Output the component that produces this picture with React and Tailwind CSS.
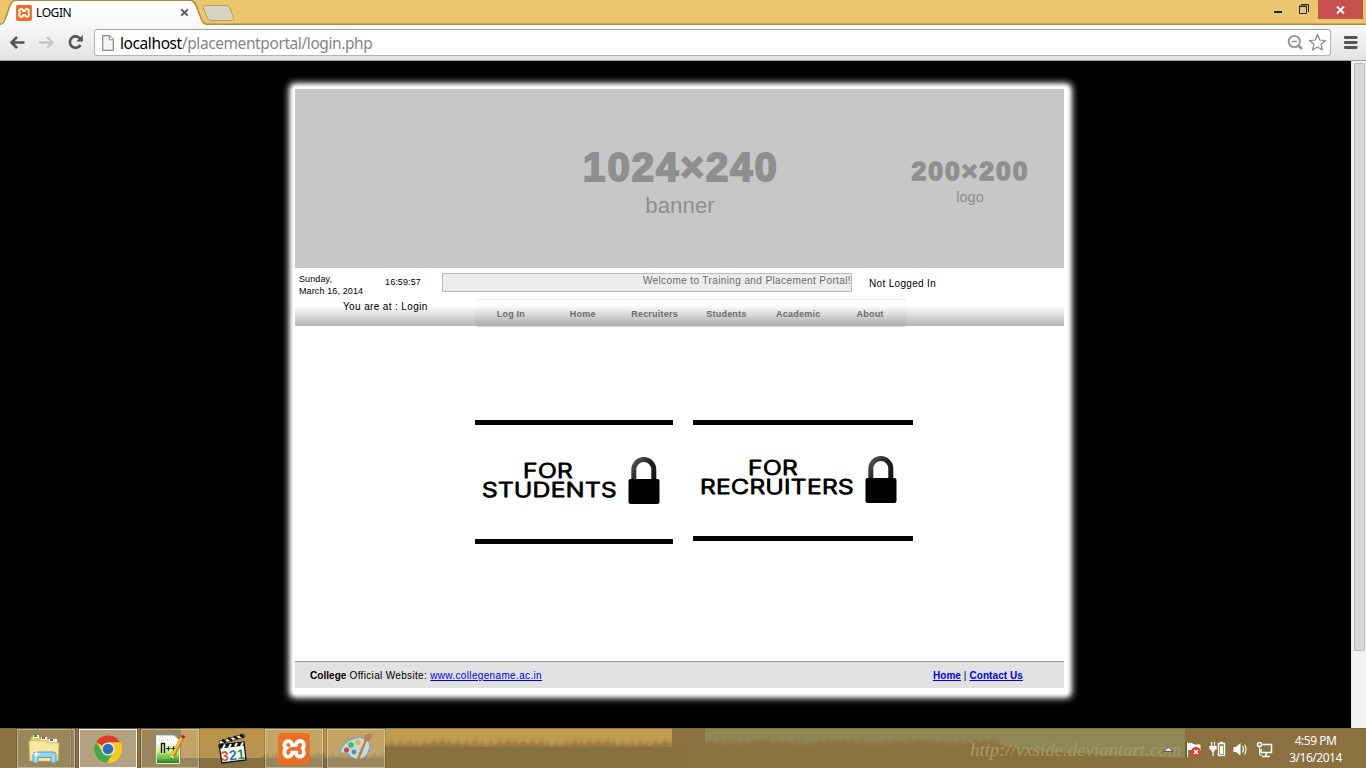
import React from "react";
import { SiXampp } from "react-icons/si";

const grass = (x0, x1, base, amp) => {
  let d = `M${x0} 40V${base}`;
  let i = 0;
  for (let x = x0; x < x1; x += 3) {
    const h = ((i * 37) % 11) / 11;
    d += `L${x + 1} ${base - h * amp}L${Math.min(x + 3, x1)} ${base + 2 * Math.sin(i / 4)}`;
    i += 1;
  }
  return `${d}L${x1} 40Z`;
};

function XamppIcon({ size }) {
  return (
    <span className="relative flex shrink-0 rounded-[4px] bg-linear-to-b from-white to-white bg-clip-content p-[2px]" style={{ width: size, height: size }}>
      <SiXampp className="-m-[2px] shrink-0 text-[#ee6f22]" size={size} />
    </span>
  );
}

function TabStrip() {
  return (
    <div className="relative flex h-[25px] bg-[#ebc66d]">
      <svg className="absolute inset-0" width="1366" height="25">
        <defs>
          <linearGradient id="tab" x1="0" y1="0" x2="0" y2="1">
            <stop offset="0" stopColor="#fff" />
            <stop offset="1" stopColor="#f8f8f8" />
          </linearGradient>
        </defs>
        <path d="M0 23.5H1366" stroke="#dbb55d" />
        <path d="M0 24.5C4 24 4.500 21 6 17L10 5Q12 .5 15 .5H190Q194 .5 196 5L201 18Q203 24.500 208 24.500H1366" fill="none" stroke="#a98a48" strokeWidth="1.300" />
        <path d="M0 25C4 25 5 21 7 17L11 6Q13 1 16 1H189Q193 1 195 6L200 18Q202 25 206 25Z" fill="url(#tab)" />
        <path d="M205 5.500H226Q229 5.500 230 8L233.500 18Q234.500 20.500 231 20.500H211Q208.500 20.500 207.500 18L203.500 8Q202.500 5.500 205 5.500Z" fill="#d7d3c2" stroke="#b99c5e" />
      </svg>
      <div className="relative flex w-[206px] items-center pl-4">
        <XamppIcon size={16} />
        <span className="ml-1 font-['Noto_Sans',sans-serif] text-[12px] leading-4 tracking-[-0.4px] text-black">LOGIN</span>
        <svg className="ml-auto mr-[17px]" width="9" height="9" viewBox="0 0 9 9"><path d="M1.300 1.300L7.700 7.700M7.700 1.300L1.300 7.700" stroke="#555" strokeWidth="1.900" /></svg>
      </div>
      <div className="relative ml-auto mr-[3px] flex h-[19px]">
        <svg width="45" height="19"><path d="M1 12H9" stroke="#222" strokeWidth="2" /><path d="M26.500 6.500H33.500V13.500H26.500ZM28 4.500H35.500V12" fill="none" stroke="#222" /><path d="M26 6H34" stroke="#222" strokeWidth="1" /></svg>
        <div className="flex w-[45px] items-center justify-center bg-[#c75050]">
          <svg width="9" height="8" viewBox="0 0 9 8"><path d="M1 .5L8 7.500M8 .5L1 7.500" stroke="#fff" strokeWidth="1.900" /></svg>
        </div>
      </div>
    </div>
  );
}

function Toolbar() {
  return (
    <div className="flex h-9 border-b border-[#a0a0a0] bg-linear-to-b from-[#f8f8f8] to-[#e3e3e3] pt-1">
      <svg width="94" height="28">
        <path d="M24.500 13.500H12M17 8L11.500 13.500L17 19" fill="none" stroke="#555" strokeWidth="2.600" />
        <path d="M39 13.500H52M47 8L52.500 13.500L47 19" fill="none" stroke="#c6c6c6" strokeWidth="2.400" />
        <path d="M80 9.500A5.700 5.700 0 1 0 80.500 16" fill="none" stroke="#555" strokeWidth="2.600" />
        <path d="M82.800 6V12.500H76.300Z" fill="#555" />
      </svg>
      <div className="flex h-[27px] w-[1237px] items-center rounded-[3px] border border-[#b2b2b2] border-t-[#a0a0a0] bg-white">
        <svg className="ml-[7px]" width="12" height="16" viewBox="0 0 12 16"><path d="M.7 .7H7.500L11.300 4.500V15.300H.7Z" fill="#f5f5f5" stroke="#8b8b8b" strokeWidth="1.200" /><path d="M7.300 .7V4.800H11.300" fill="#fff" stroke="#8b8b8b" /></svg>
        <span className="ml-[6px] font-['Noto_Sans',sans-serif] text-[15.500px] leading-6 tracking-[-0.41px] text-[#858585]"><span className="text-black">localhost</span>/placementportal/login.php</span>
        <svg className="ml-auto mr-[3px]" width="40" height="20">
          <circle cx="7.300" cy="8.500" r="5.600" fill="none" stroke="#999" strokeWidth="2" /><path d="M4.500 8.500H10" stroke="#888" strokeWidth="1.400" /><path d="M11 12L15 16" stroke="#999" strokeWidth="2.800" />
          <path d="M30.500 1.500L32.700 7L38.500 7.500L34.100 11.300L35.400 17L30.500 14L25.600 17L26.900 11.300L22.500 7.500L28.300 7Z" fill="#fff" stroke="#888" strokeWidth="1.200" strokeLinejoin="round" />
        </svg>
      </div>
      <svg className="ml-[13px]" width="14" height="28"><path d="M1.200 8.500H12.200M1.200 13.500H12.200M1.200 18.500H12.200" stroke="#555" strokeWidth="2.800" strokeLinecap="round" /></svg>
    </div>
  );
}

function Padlock() {
  return (
    <svg width="32" height="49" viewBox="0 0 32 49">
      <defs><linearGradient id="shackle" x1="0" y1="0" x2="1" y2="1"><stop offset="0" stopColor="#555" /><stop offset=".5" stopColor="#222" /><stop offset="1" stopColor="#111" /></linearGradient></defs>
      <path d="M5.800 27V13.500A10 10 0 0 1 25.800 13.500V27" fill="none" stroke="url(#shackle)" strokeWidth="5" />
      <rect x=".5" y="23" width="31" height="25" rx="2" fill="#000" />
    </svg>
  );
}

function LoginCard({ word, wordWidth, className, forX, lineGap }) {
  return (
    <div className={`flex flex-col justify-between border-y-[5px] border-black ${className}`}>
      <div className="flex">
        <svg width={wordWidth + 8} height="50" fill="#000" stroke="#000" strokeWidth="1.100" strokeLinejoin="round" fontFamily="Inter, sans-serif" fontWeight="300">
          <text x={forX} y={lineGap} fontSize="20" textLength="50" lengthAdjust="spacingAndGlyphs">FOR</text>
          <text x="0" y={lineGap + 19} fontSize="20" textLength={wordWidth} lengthAdjust="spacingAndGlyphs">{word}</text>
        </svg>
        <div className="ml-[3px]"><Padlock /></div>
      </div>
    </div>
  );
}

const navItems = ["Log In", "Home", "Recruiters", "Students", "Academic", "About"];

function Portal() {
  return (
    <div className="mt-[26px] h-[607px] w-[775px] rounded-[2px] bg-white pl-[2px] pr-[4px] pt-[2px] font-['Liberation_Sans',Arial,sans-serif] text-[10px] leading-3 tracking-[0.33px] text-black shadow-[0_0_7px_4px_#fff,0_0_4px_1px_#fff]">
      <div className="flex h-[604px] w-[769px] flex-col">
        <div className="flex h-[179px] shrink-0 bg-[#c7c7c7] text-[#8f8f8f]">
          <div className="ml-[261px] w-[250px] pt-[55px] text-center tracking-normal">
            <div className="text-[40px] leading-[46px] font-bold tracking-[2.100px] [-webkit-text-stroke:2px_#8f8f8f]">1024×240</div>
            <div className="mt-[3px] -ml-[2px] text-[22.300px] leading-[26px]">banner</div>
          </div>
          <div className="ml-[89px] w-[150px] pt-[66px] text-center tracking-normal">
            <div className="ml-px text-[26.500px] leading-8 font-bold tracking-[2px] [-webkit-text-stroke:1.500px_#8f8f8f]">200×200</div>
            <div className="mt-px text-[14.500px] leading-[18px]">logo</div>
          </div>
        </div>
        <div className="flex h-[58px] shrink-0 bg-linear-to-b from-white from-65% to-[#b5b5b5]">
          <div className="w-[147px]">
            <div className="flex pt-[5px] pl-1 text-[9px] tracking-[0.12px]">
              <div className="w-[86px]">Sunday,<br />March 16, 2014</div>
              <div className="pt-[3px]">16:59:57</div>
            </div>
            <div className="mt-1 pl-12 tracking-[0.37px]">You are at : Login</div>
          </div>
          <div className="w-[465px]">
            <div className="mt-[5px] h-[19px] w-[410px] border border-[#bcbcbc] bg-[#ededed] pt-px text-right tracking-[0.39px] text-[#6b6b6b]">Welcome to Training and Placement Portal!</div>
            <div className="mt-[7px] ml-[33px] flex h-[28px] w-[432px] rounded-[3px] border-y border-t-[#ececec] border-b-[#dedede] bg-linear-to-b from-white from-20% to-[#b0b0b0] to-95% pl-px text-center text-[9px] leading-[28px] font-bold text-[#6b6b6b]">
              {navItems.map((item) => <a key={item} className="-ml-px mr-px w-[71.900px] tracking-[0.22px]">{item}</a>)}
            </div>
          </div>
          <div className="mt-[10px] -ml-[38px]">Not Logged In</div>
        </div>
        <div className="flex grow pt-[94px] pl-[180px]">
          <LoginCard word="STUDENTS" wordWidth={135} forX={41} lineGap={22} className="h-[124px] w-[198px] pt-[31px] pl-[7px]" />
          <LoginCard word="RECRUITERS" wordWidth={154} forX={48} lineGap={20} className="ml-5 h-[121px] w-[220px] pt-[30px] pl-[7px]" />
        </div>
        <div className="mb-[5px] flex h-[27px] items-center justify-between border-t border-[#9c9c9c] bg-[#e1e1e1] pt-[2px] pr-[41px] pl-[15px]">
          <div><b className="tracking-[0.050px]">College</b> Official Website: <a className="tracking-[0.35px] text-[#0000ee] underline">www.collegename.ac.in</a></div>
          <div className="tracking-[0.080px]"><a className="font-bold text-[#0000ee] underline">Home</a> | <a className="font-bold text-[#0000ee] underline">Contact Us</a></div>
        </div>
      </div>
    </div>
  );
}

function ExplorerIcon() {
  return (
    <svg className="shrink-0" width="34" height="32" viewBox="0 0 34 32">
      <path d="M4 4H12L14 6H30V26H3Z" fill="#e7cb65" stroke="#c4a847" />
      <path d="M6 2H12V5H6Z" fill="#fff" /><path d="M7 2H10V4H7Z" fill="#1ca52c" /><path d="M14 4H20V7H14Z" fill="#fff" /><path d="M15 4H18V6H15Z" fill="#c44325" /><path d="M22 6H30V9H22Z" fill="#fff" /><path d="M23 6H26V8H23Z" fill="#2b78c8" />
      <path d="M2 8H18L20 10H32L31 28H3Z" fill="#f8e99f" stroke="#d7bd65" strokeWidth=".7" />
      <path d="M6 30V21Q6 19 9 19H26Q29 19 29 21V30H24V24.500H11V30Z" fill="#9bd3ec" stroke="#539dbe" />
      <path d="M9 16L9.800 20.200L14 21L9.800 21.800L9 26L8.200 21.800L4 21L8.200 20.200Z" fill="#fff" />
    </svg>
  );
}

function ChromeIcon() {
  return (
    <svg width="30" height="30" viewBox="0 0 30 30">
      <circle cx="15" cy="15" r="14" fill="#f8cb22" />
      <path d="M15 15L3 8A14 14 0 0 1 27.300 8.500L15 8.500Z" fill="#da3b32" />
      <path d="M2.900 8A14 14 0 0 0 14 29L20.800 18.500L15 15L9.500 18Z" fill="#43a84b" />
      <path d="M15 8.500H27.300A14 14 0 0 1 14 29L20.500 18Z" fill="#f8cb22" />
      <circle cx="15" cy="15" r="6.600" fill="#eee" /><circle cx="15" cy="15" r="5.300" fill="#2d70b8" />
    </svg>
  );
}

function NotepadIcon() {
  return (
    <svg width="32" height="32" viewBox="0 0 32 32">
      <defs><linearGradient id="page" x1="0" y1="0" x2="0" y2="1"><stop offset=".25" stopColor="#fff" /><stop offset=".6" stopColor="#c0e96e" /><stop offset="1" stopColor="#148018" /></linearGradient></defs>
      <path d="M2.500 2.500H20L25.500 8V30.500H2.500Z" fill="url(#page)" stroke="#e7ecdf" />
      <path d="M4 1.500H23" stroke="#8897a2" strokeDasharray="1.500 1" strokeWidth="2" /><path d="M5 7H20M5 25H21" stroke="#b4cba2" strokeDasharray="1 1" />
      <path d="M7.500 20V10.500H10.500V20" fill="none" stroke="#111" strokeWidth="1.400" /><path d="M12 15.500H16.500M14.300 13.200V17.800M17.500 15.500H22M19.700 13.200V17.800" stroke="#111" />
      <path d="M29 3L19 23" stroke="#cf801b" strokeWidth="4" /><path d="M28 4L18.500 22" stroke="#f9c849" strokeWidth="1.800" /><path d="M27.500 3L30.500 4.500" stroke="#aa2634" strokeWidth="3" /><path d="M17.300 22L16.800 26L20 24Z" fill="#eee" /><path d="M16.800 26L18 25" stroke="#111" />
    </svg>
  );
}

function ClapperIcon() {
  return (
    <svg width="32" height="34" viewBox="0 0 32 34">
      <path d="M2 9L27 2L28 5L3 12Z" fill="#fff" stroke="#111" strokeWidth=".7" />
      <path d="M5 8L9 10M11 6L15 8.500M17 4.500L21 7M23 3L27 5" stroke="#111" strokeWidth="2.600" />
      <path d="M2 13L27 10L29 28L5 31Z" fill="#fff" stroke="#111" strokeWidth="1.300" /><path d="M2.500 13L27 10L27.500 13.500L3 16.500Z" fill="#111" />
      <path d="M8 12.500L6 16M14 12L12 15.500M20 11L18 14.500M26 10.500L24 14" stroke="#fff" strokeWidth="2" />
      <g transform="rotate(-6 16 23)" fontFamily="Liberation Sans, sans-serif" fontWeight="700" fontSize="14"><text x="4" y="28" fill="#dc5528">3</text><text x="12" y="28" fill="#2577b9">2</text><text x="20" y="28" fill="#269548">1</text></g>
    </svg>
  );
}

function PaintIcon() {
  return (
    <svg width="34" height="32" viewBox="0 0 34 32">
      <path d="M17 5C27 3 33 9 30 17C28 25 20 28 14 25C10 23 9 19 6 20C2 21 0 18 4 13C7 9 12 6 17 5Z" fill="#b6dced" stroke="#6aa5bf" />
      <circle cx="7.500" cy="17" r="2.500" fill="#d93f35" /><circle cx="12" cy="12" r="2.700" fill="#4fb449" /><circle cx="19" cy="9.500" r="2.700" fill="#f2b832" /><circle cx="15" cy="19" r="2.400" fill="#6d8994" />
      <path d="M27 7L18 29L22 18Z" fill="#e88c2d" stroke="#dc781f" strokeWidth="2.200" /><path d="M25 7C24 2 28 0 33 1C33 5 31 8 28 8Z" fill="#b98257" />
    </svg>
  );
}

function TaskButton({ children, className = "" }) {
  return <div className={`flex h-[39px] shrink-0 items-center justify-center border outline outline-1 outline-black/15 ${className}`}>{children}</div>;
}

function Taskbar() {
  return (
    <div className="relative h-10 overflow-hidden bg-[#8a713f]">
      <svg className="absolute inset-0" width="1366" height="40">
        <defs>
          <linearGradient id="gold" x1="0" y1="0" x2="0" y2="1"><stop offset="0" stopColor="#b99549" /><stop offset="1" stopColor="#b89550" /></linearGradient>
          <linearGradient id="soil" x1="0" y1="0" x2="0" y2="1"><stop offset="0" stopColor="#8e7142" /><stop offset=".5" stopColor="#89713f" /><stop offset="1" stopColor="#866e3e" /></linearGradient>
          <filter id="soft" x="0" y="-10%" width="100%" height="120%"><feGaussianBlur stdDeviation="1.2 1" /></filter>
        </defs>
        <rect x="181" width="491" height="30" fill="url(#gold)" />
        <rect x="385" width="287" height="22" fill="#bf9c4e" />
        <path d={grass(260, 385, 29, 8)} fill="#87703f" opacity=".6" />
        <rect x="181" y="30" width="204" height="10" fill="#87703f" />
        <path d={grass(385, 672, 17, 9)} fill="#89713f" filter="url(#soft)" opacity=".8" />
        <rect x="385" y="19" width="300" height="21" fill="#89713f" />
        <rect x="705" width="480" height="30" fill="#8d8855" />
        <path d={grass(705, 1000, 15, 7)} fill="#8d7443" filter="url(#soft)" />
        <rect x="690" y="17" width="310" height="23" fill="#8a7240" />
        <path d="M1000 17C1030 24 1070 25 1110 27L1185 30V40H1000Z" fill="url(#soil)" />
        <text x="970" y="28" fill="#a99766" fontFamily="Liberation Serif, serif" fontStyle="italic" fontSize="19" textLength="211" lengthAdjust="spacingAndGlyphs">http://vxside.deviantart.com</text>
        <path d="M0 .5H1366" stroke="#6b5933" opacity=".5" />
      </svg>
      <div className="relative flex h-full pt-px">
        <TaskButton className="ml-[17px] w-[54px] border-white/35 bg-white/15"><ExplorerIcon /></TaskButton>
        <TaskButton className="w-[4px] border-l-0 border-white/35 bg-white/15" />
        <TaskButton className="ml-1 w-[58px] border-white/90 bg-white/35"><ChromeIcon /></TaskButton>
        <TaskButton className="ml-1 w-[58px] border-white/35 bg-white/15"><NotepadIcon /></TaskButton>
        <div className="ml-[18px] flex w-8 items-center"><ClapperIcon /></div>
        <TaskButton className="ml-[16px] w-[58px] border-white/35 bg-white/15"><XamppIcon size={32} /></TaskButton>
        <TaskButton className="ml-1 w-[58px] border-white/35 bg-white/15"><PaintIcon /></TaskButton>
        <svg className="ml-auto" width="114" height="38">
          <path d="M4 22.500L8.500 18L13 22.500Z" fill="#eee" stroke="#4d4228" strokeWidth=".8" />
          <path d="M27.500 13V28M28.500 14.500H32L34 16H40V22H34L32 20.500H28Z" fill="#fff" stroke="#fff" /><path d="M26 13V28" stroke="#4d4228" strokeWidth=".8" /><circle cx="36" cy="23" r="5" fill="#da3e37" /><path d="M34 21L38 25M38 21L34 25" stroke="#fff" strokeWidth="1.600" />
          <path d="M51.500 13V17M54.500 13V17M50 17.500H56V20H54V22H52V20H50ZM53 22V27" fill="#fff" stroke="#fff" strokeWidth="1.200" /><rect x="58.500" y="14.500" width="6" height="12" fill="#fff" fillOpacity=".1" stroke="#fff" strokeWidth="1.400" /><path d="M60 13.500H63" stroke="#fff" strokeWidth="1.500" /><rect x="60" y="17" width="3" height="8" fill="#fff" />
          <path d="M73.500 18H76L80.500 14V26.500L76 23H73.500Z" fill="#fff" /><path d="M82.500 17Q84.500 20 82.500 23.500M84.500 15.500Q87.500 20 84.500 25.500" fill="none" stroke="#fff" strokeWidth="1.200" />
          <path d="M102.500 15.500H111.500V23.500H101V20M106 24V27M102 27.500H110" fill="none" stroke="#fff" strokeWidth="1.500" /><circle cx="99.500" cy="15.500" r="2" fill="none" stroke="#fff" strokeWidth="1.400" /><path d="M99.500 18V26H102" fill="none" stroke="#fff" />
        </svg>
        <div className="mr-[18px] ml-[9px] w-[65px] pt-[3px] text-center font-['Noto_Sans',sans-serif] text-[12px] leading-[17px] tracking-[-0.48px] whitespace-nowrap text-white">4:59 PM<br />3/16/2014</div>
      </div>
    </div>
  );
}

export default function App() {
  return (
    <div className="flex h-[768px] w-[1366px] flex-col overflow-hidden bg-black">
      <TabStrip />
      <Toolbar />
      <div className="flex h-[667px]">
        <div className="flex w-[1351px] pl-[293px]"><Portal /></div>
        <div className="w-[15px] border-l border-[#e0e0e0] bg-[#f1f1f1] pt-[2px] pl-[2px]">
          <div className="h-[588px] w-[11px] rounded-[2px] border border-[#b9b9b9] bg-[#d9d9d9]" />
        </div>
      </div>
      <Taskbar />
    </div>
  );
}
